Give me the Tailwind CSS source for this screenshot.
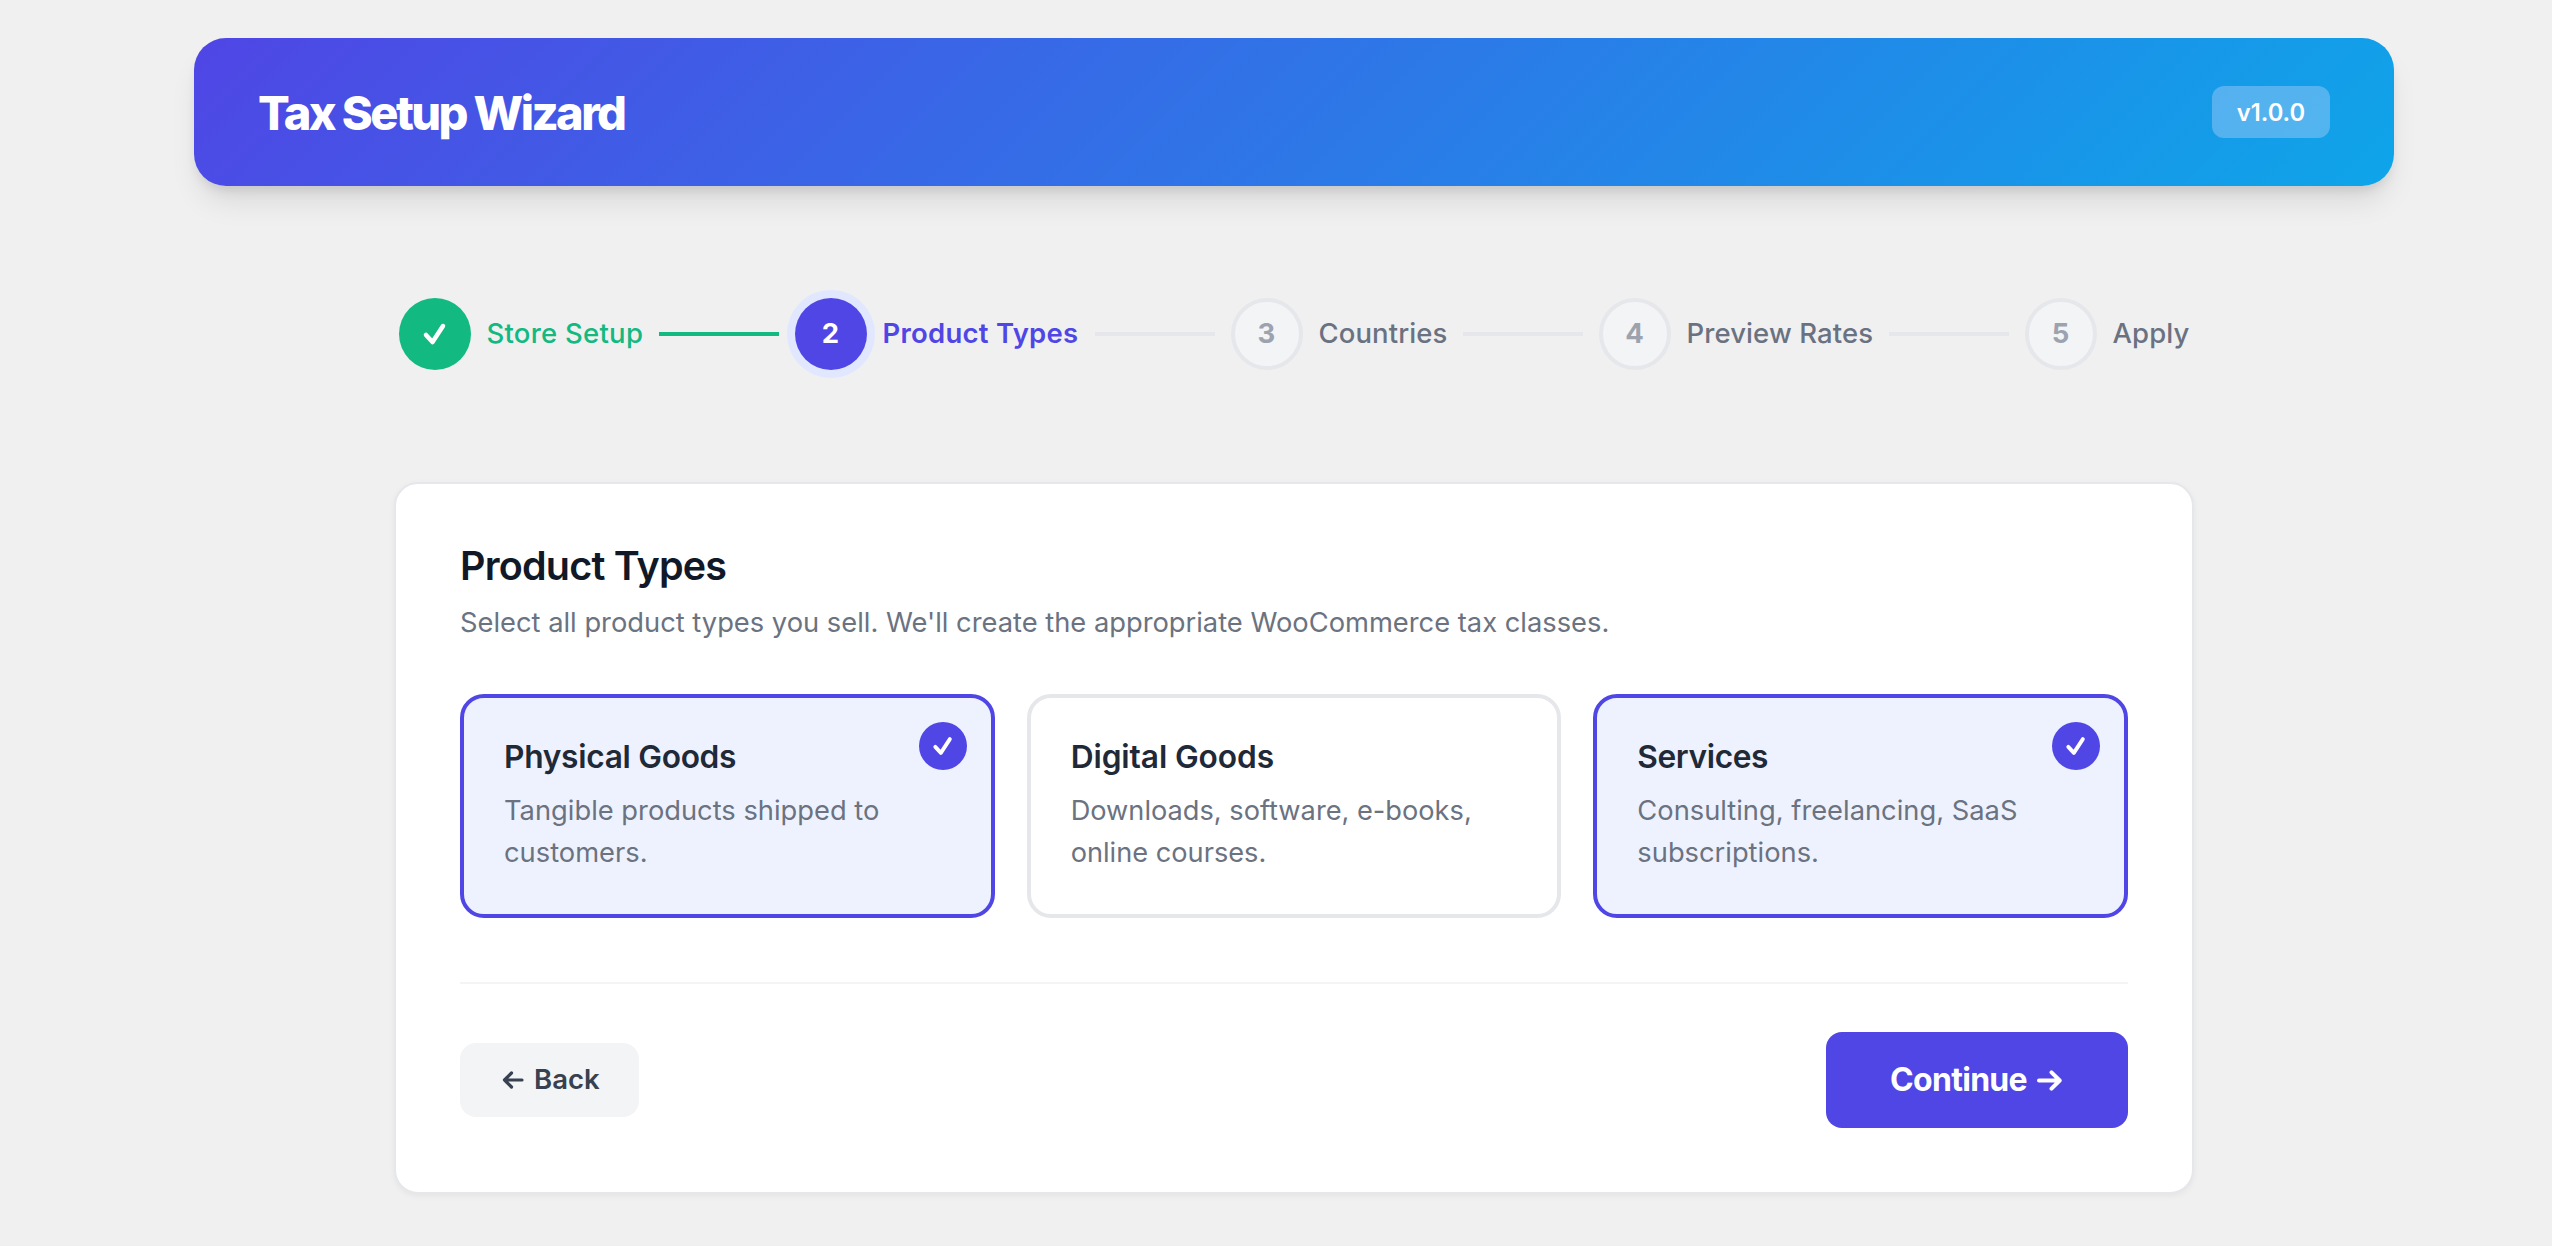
<!DOCTYPE html>
<html lang="en">
<head>
  <meta charset="UTF-8" />
  <meta name="viewport" content="width=device-width, initial-scale=1.0" />
  <title>Tax Setup Wizard</title>
  <script src="https://cdn.jsdelivr.net/npm/@tailwindcss/browser@4"></script>
</head>
<body class="bg-[#f0f0f0] min-h-screen overflow-hidden pt-[38px] pl-[194px] font-['Inter',sans-serif] whitespace-nowrap">

  <div class="w-[2200px]">

    <!-- Header -->
    <header class="h-[148px] px-16 flex items-center justify-between rounded-[32px] text-white bg-[linear-gradient(135deg,#4f46e5_0%,#0ea5e9_100%)] shadow-[0_20px_30px_-6px_rgba(0,0,0,0.1),0_8px_12px_-4px_rgba(0,0,0,0.1)]">
      <h1 class="pt-0.5 text-[47px] leading-[58px] font-extrabold tracking-[-2.6px]">Tax Setup Wizard</h1>
      <span class="w-[118px] h-[52px] pt-px flex items-center justify-center rounded-xl bg-[#ebe6ff]/30 text-[23.7px] font-semibold">v1.0.0</span>
    </header>

    <!-- Steps -->
    <nav class="mt-28 h-[72px] flex items-center justify-center gap-4 text-[27.5px] font-medium text-gray-500">
      <div class="flex items-center gap-4 text-[#12b981]">
        <span class="size-[72px] rounded-full bg-[#12b981] text-white flex items-center justify-center">
          <svg class="size-7" viewBox="0 0 28 28" fill="none" stroke="currentColor" stroke-width="4.500" stroke-linecap="round" stroke-linejoin="round"><path d="M5 15l6.500 7L22 6" /></svg>
        </span>
        <span class="w-[156px] tracking-[0.25px]">Store Setup</span>
      </div>
      <div class="w-[120px] h-1 bg-[#12b981]"></div>
      <div class="flex items-center gap-4 text-[#4f46e5]">
        <span class="size-[72px] rounded-full bg-[#4f46e5] text-white font-bold flex items-center justify-center ring-8 ring-[#e0e7ff]">2</span>
        <span class="w-[196px] font-semibold tracking-[0.25px]">Product Types</span>
      </div>
      <div class="w-[120px] h-1 bg-[#e5e7eb]"></div>
      <div class="flex items-center gap-4">
        <span class="size-[72px] rounded-full bg-[#f3f4f6] border-4 border-[#e5e7eb] text-[#9ca3af] font-bold flex items-center justify-center">3</span>
        <span class="w-[128px] tracking-[0.1px]">Countries</span>
      </div>
      <div class="w-[120px] h-1 bg-[#e5e7eb]"></div>
      <div class="flex items-center gap-4">
        <span class="size-[72px] rounded-full bg-[#f3f4f6] border-4 border-[#e5e7eb] text-[#9ca3af] font-bold flex items-center justify-center">4</span>
        <span class="w-[186px] tracking-[0.1px]">Preview Rates</span>
      </div>
      <div class="w-[120px] h-1 bg-[#e5e7eb]"></div>
      <div class="flex items-center gap-4">
        <span class="size-[72px] rounded-full bg-[#f3f4f6] border-4 border-[#e5e7eb] text-[#9ca3af] font-bold flex items-center justify-center">5</span>
        <span class="w-[77px] tracking-[0.1px]">Apply</span>
      </div>
    </nav>

    <!-- Panel -->
    <main class="mt-28 mx-auto w-[1800px] h-[712px] bg-white border-2 border-[#e5e7eb] rounded-3xl px-16 pt-14 shadow-[0_2px_6px_rgba(0,0,0,0.05)]">
      <h2 class="text-[39.5px] leading-[53px] font-semibold tracking-[-0.8px] text-[#111827]">Product Types</h2>
      <p class="mt-[9px] text-[27.3px] leading-[42px] text-[#6b7280]">Select all product types you sell. We'll create the appropriate WooCommerce tax classes.</p>

      <div class="mt-[50px] grid grid-cols-3 gap-8">
        <div class="relative h-56 p-10 border-4 border-[#4f46e5] bg-[#eef2ff] rounded-3xl">
          <h3 class="text-[31.7px] leading-[38px] font-semibold tracking-[-0.3px] text-[#1f2937]">Physical Goods</h3>
          <p class="mt-3.5 text-[27.3px] leading-[42px] text-[#6b7280]">Tangible products shipped to<br />customers.</p>
          <span class="absolute top-6 right-6 size-12 rounded-full bg-[#4f46e5] text-white flex items-center justify-center">
            <svg class="size-6" viewBox="0 0 28 28" fill="none" stroke="currentColor" stroke-width="4.500" stroke-linecap="round" stroke-linejoin="round"><path d="M5 15l6.500 7L22 6" /></svg>
          </span>
        </div>
        <div class="h-56 p-10 border-4 border-[#e5e7eb] rounded-3xl">
          <h3 class="text-[31.7px] leading-[38px] font-semibold tracking-[-0.1px] text-[#1f2937]">Digital Goods</h3>
          <p class="mt-3.5 text-[27.2px] leading-[42px] text-[#6b7280]">Downloads, software, e-books,<br />online courses.</p>
        </div>
        <div class="relative h-56 p-10 border-4 border-[#4f46e5] bg-[#eef2ff] rounded-3xl">
          <h3 class="text-[31.7px] leading-[38px] font-semibold tracking-[-0.4px] text-[#1f2937]">Services</h3>
          <p class="mt-3.5 text-[27.3px] leading-[42px] text-[#6b7280]">Consulting, freelancing, SaaS<br />subscriptions.</p>
          <span class="absolute top-6 right-6 size-12 rounded-full bg-[#4f46e5] text-white flex items-center justify-center">
            <svg class="size-6" viewBox="0 0 28 28" fill="none" stroke="currentColor" stroke-width="4.500" stroke-linecap="round" stroke-linejoin="round"><path d="M5 15l6.500 7L22 6" /></svg>
          </span>
        </div>
      </div>

      <!-- Actions -->
      <div class="mt-16 pt-12 border-t-2 border-[#f3f4f6] flex items-center justify-between">
        <button class="w-[179px] h-[74px] pl-[42px] flex items-center gap-[10px] rounded-2xl bg-[#f3f4f6] text-[#374151] text-[27.5px] font-semibold">
          <svg class="w-[22px] h-[18px]" viewBox="0 0 22 18" fill="none" stroke="currentColor" stroke-width="3.200" stroke-linecap="round" stroke-linejoin="round"><path d="M20 9H2.500M9.500 2 2.500 9l7 7" /></svg>
          <span>Back</span>
        </button>
        <button class="w-[302px] h-24 pl-[63px] flex items-center gap-[9px] rounded-2xl bg-[#4f46e5] text-white text-[32px] font-bold">
          <span class="w-[139px] tracking-[-0.7px]">Continue</span>
          <svg class="w-[25px] h-[21px]" viewBox="0 0 25 21" fill="none" stroke="currentColor" stroke-width="4" stroke-linecap="round" stroke-linejoin="round"><path d="M2 10.500H22.500M14.500 2.300l8.200 8.200-8.200 8.200" /></svg>
        </button>
      </div>
    </main>
  </div>

</body>
</html>
